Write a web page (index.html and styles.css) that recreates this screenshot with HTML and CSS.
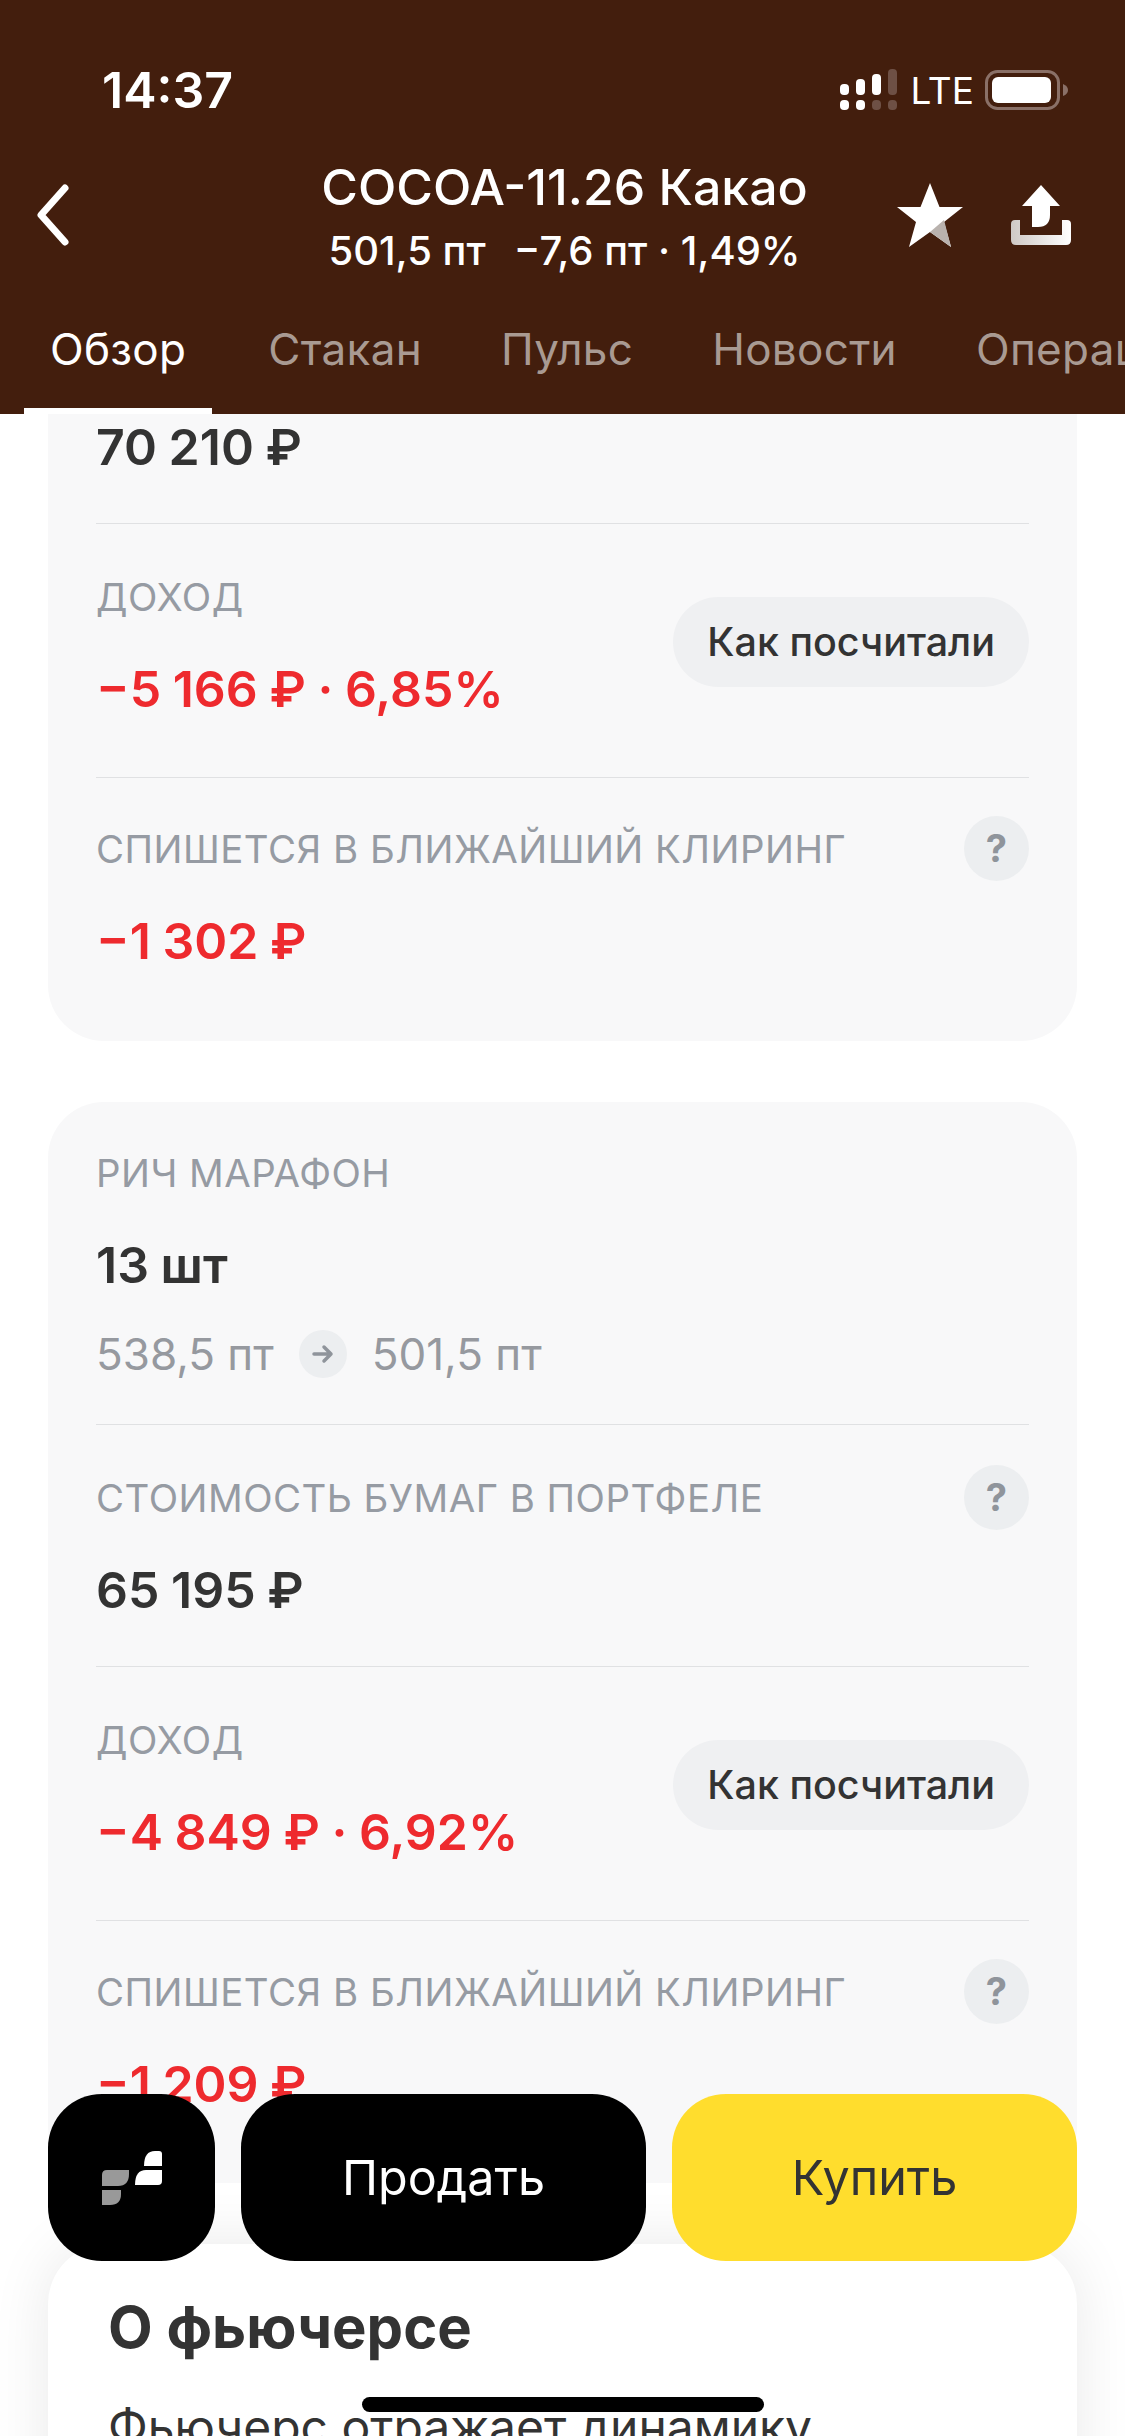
FILE: index.html
```html
<!DOCTYPE html>
<html lang="ru">
<head>
    <meta charset="UTF-8">
    <meta name="viewport" content="width=device-width, initial-scale=1.0">
    <title>COCOA-11.26 Какао</title>
    <link rel="stylesheet" href="styles.css">
</head>
<body>
<div class="screen">
    <header class="top">
        <div class="status">
            <span class="time">14:37</span>
            <div class="status-right">
                <svg class="signal" width="60" height="42" viewBox="0 0 60 42">
                    <g fill="#fff">
                        <rect x="0" y="15" width="9" height="11" rx="4"/>
                        <rect x="0" y="31" width="9" height="10" rx="4"/>
                        <rect x="16" y="10" width="9" height="16" rx="4"/>
                        <rect x="16" y="31" width="9" height="10" rx="4"/>
                        <rect x="32" y="5" width="9" height="21" rx="4"/>
                    </g>
                    <g fill="#6e5045">
                        <rect x="32" y="31" width="9" height="10" rx="4"/>
                        <rect x="48" y="0" width="9" height="26" rx="4"/>
                        <rect x="48" y="31" width="9" height="10" rx="4"/>
                    </g>
                </svg>
                <span class="lte">LTE</span>
                <svg class="battery" width="84" height="40" viewBox="0 0 84 40">
                    <rect x="1.5" y="1.5" width="72" height="37" rx="11" fill="none" stroke="#8a7067" stroke-width="3"/>
                    <rect x="7" y="7" width="59" height="26" rx="6" fill="#fff"/>
                    <path d="M78 14q5 2 5 6t-5 6z" fill="#8a7067"/>
                </svg>
            </div>
        </div>
        <div class="nav">
            <svg class="back" width="44" height="66" viewBox="0 0 44 66">
                <path d="M33 6 9 33l24 27" fill="none" stroke="#fff" stroke-width="7" stroke-linecap="round" stroke-linejoin="round"/>
            </svg>
            <div class="title-box">
                <div class="title">COCOA-11.26 Какао</div>
                <div class="subtitle"><span>501,5 пт</span><span>−7,6 пт · 1,49%</span></div>
            </div>
            <svg class="star" width="66" height="64" viewBox="0 0 66 64">
                <path d="M33 0l9.500 24H66L47 39l7 25-21-15-21 15 7-25L0 24h23.500z" fill="#fff"/>
                <path d="M33 49l14-12 7 27z" fill="#b9b2ae"/>
            </svg>
            <svg class="share" width="60" height="60" viewBox="0 0 60 60">
                <defs>
                    <linearGradient id="tray" x1="0" y1="0" x2="1" y2="0">
                        <stop offset="0" stop-color="#cfc9c5"/>
                        <stop offset="1" stop-color="#fff"/>
                    </linearGradient>
                </defs>
                <path d="M30 0 49 21H39v9q0 12-12 12h-6V21H11z" fill="#fff"/>
                <path d="M0 39q0-4 4-4h5v15h42V35h5q4 0 4 4v16q0 5-5 5H5q-5 0-5-5z" fill="url(#tray)"/>
            </svg>
        </div>
        <nav class="tabs">
            <span class="tab tab-active">Обзор</span>
            <span class="tab">Стакан</span>
            <span class="tab">Пульс</span>
            <span class="tab">Новости</span>
            <span class="tab">Операции</span>
        </nav>
    </header>

    <main class="content">
        <section class="card card-first">
            <div class="row row-cut">
                <div class="value">70 210 ₽</div>
            </div>
            <div class="row row-split">
                <div>
                    <div class="label">Доход</div>
                    <div class="value red">−5 166 ₽ · 6,85%</div>
                </div>
                <span class="pill">Как посчитали</span>
            </div>
            <div class="row row-last">
                <div class="label-line">
                    <div class="label">Спишется в ближайший клиринг</div>
                    <span class="help">?</span>
                </div>
                <div class="value red">−1 302 ₽</div>
            </div>
        </section>

        <section class="card card-second">
            <div class="row row-head">
                <div class="label">Рич Марафон</div>
                <div class="value">13 шт</div>
                <div class="prices">
                    <span>538,5 пт</span>
                    <span class="arrow">
                        <svg width="22" height="20" viewBox="0 0 22 20">
                            <path d="M2 10h17M12 3l7 7-7 7" fill="none" stroke="#8f949b" stroke-width="3.5" stroke-linecap="round" stroke-linejoin="round"/>
                        </svg>
                    </span>
                    <span>501,5 пт</span>
                </div>
            </div>
            <div class="row">
                <div class="label-line">
                    <div class="label">Стоимость бумаг в портфеле</div>
                    <span class="help">?</span>
                </div>
                <div class="value">65 195 ₽</div>
            </div>
            <div class="row row-split">
                <div>
                    <div class="label">Доход</div>
                    <div class="value red">−4 849 ₽ · 6,92%</div>
                </div>
                <span class="pill">Как посчитали</span>
            </div>
            <div class="row row-last">
                <div class="label-line">
                    <div class="label">Спишется в ближайший клиринг</div>
                    <span class="help">?</span>
                </div>
                <div class="value red">−1 209 ₽</div>
            </div>
        </section>

        <section class="about">
            <h2>О фьючерсе</h2>
            <p>Фьючерс отражает динамику</p>
        </section>
    </main>

    <div class="actions">
        <button class="btn btn-logo" type="button">
            <svg width="64" height="56" viewBox="0 0 64 56">
                <path d="M2 25q0-5 5-5h22v4q0 12-11 12H2z" fill="#999"/>
                <path d="M2 40h19v4q0 11-11 11H2z" fill="#999"/>
                <path d="M46 20h16v11q0 4-4 4H35q0-15 11-15z" fill="#fff"/>
                <path d="M44 16q0-15 11-15h4q3 0 3 3v12z" fill="#fff"/>
            </svg>
        </button>
        <button class="btn btn-sell" type="button">Продать</button>
        <button class="btn btn-buy" type="button">Купить</button>
    </div>
    <div class="home-bar"></div>
</div>
</body>
</html>
```

FILE: styles.css
```css
* {
    box-sizing: border-box;
}
html, body {
    margin: 0;
    background-color: #fff;
}
.screen {
    position: relative;
    width: 1125px;
    height: 2436px;
    overflow: hidden;
    font-family: Inter, "Noto Sans", sans-serif;
    color: #333;
}

/* header */
.top {
    height: 414px;
    background-color: #431e0d;
    color: #fff;
}
.status {
    display: flex;
    justify-content: space-between;
    align-items: center;
    height: 126px;
    padding: 54px 56px 0 102px;
}
.time {
    font-size: 50px;
    font-weight: 600;
}
.status-right {
    display: flex;
    align-items: center;
    gap: 11px;
}
.lte {
    font-size: 37px;
    font-weight: 400;
}
.nav {
    display: flex;
    align-items: center;
    height: 110px;
    margin-top: 34px;
    padding: 0 54px 0 32px;
}
.title-box {
    flex: 1;
    padding: 10px 0 0 156px;
    text-align: center;
}
.title {
    font-size: 50px;
    font-weight: 500;
    line-height: 62px;
}
.subtitle {
    display: flex;
    justify-content: center;
    gap: 28px;
    font-size: 40px;
    font-weight: 500;
    line-height: 66px;
}
.star {
    margin-right: 48px;
}
.tabs {
    display: flex;
    gap: 79px;
    height: 116px;
    margin-top: 28px;
    padding: 18px 0 0 50px;
    overflow: hidden;
    white-space: nowrap;
}
.tab {
    flex: none;
    font-size: 44px;
    letter-spacing: 0.3px;
    line-height: 66px;
    color: #a99a92;
}
.tab-active {
    position: relative;
    margin-right: 3px;
    color: #fff;
}
.tab-active::after {
    content: "";
    position: absolute;
    left: -26px;
    right: -26px;
    bottom: 0;
    height: 6px;
    background-color: #fff;
}

/* cards */
.content {
    display: flex;
    flex-direction: column;
    gap: 61px;
    padding: 0 48px;
}
.card {
    padding: 0 48px;
    background-color: #f8f8f9;
    border-radius: 56px;
}
.card-first {
    height: 627px;
    border-radius: 0 0 56px 56px;
}
.card-second {
    height: 1081px;
}
.row {
    padding: 47px 0 43px;
    border-bottom: 1px solid #e0e1e3;
}
.row-cut {
    padding-top: 0;
}
.row-head {
    padding-top: 45px;
    padding-bottom: 41px;
}
.row-split {
    display: flex;
    justify-content: space-between;
    align-items: flex-start;
    padding-bottom: 55px;
}
.row-last {
    padding-top: 45px;
    border-bottom: none;
}
.label {
    font-size: 38.400px;
    line-height: 52px;
    letter-spacing: 0.5px;
    color: #969ba3;
    text-transform: uppercase;
}
.label-line {
    display: flex;
    justify-content: space-between;
    align-items: center;
    height: 52px;
}
.value {
    margin-top: 33px;
    font-size: 50px;
    font-weight: 600;
    word-spacing: -1px;
    line-height: 66px;
    color: #333;
}
.row-cut .value {
    margin-top: 0;
}
.value.red {
    color: #ee2a2e;
}
.prices {
    display: flex;
    align-items: center;
    gap: 25px;
    margin-top: 27px;
    font-size: 44px;
    line-height: 58px;
    color: #96999f;
}
.arrow {
    display: flex;
    justify-content: center;
    align-items: center;
    width: 48px;
    height: 48px;
    background-color: #eceef0;
    border-radius: 50%;
}
.pill {
    display: flex;
    align-items: center;
    height: 90px;
    margin-top: 26px;
    padding: 0 34px;
    font-size: 39.500px;
    font-weight: 500;
    color: #333;
    background-color: #eff0f2;
    border-radius: 45px;
}
.help {
    display: flex;
    flex: none;
    justify-content: center;
    align-items: center;
    width: 65px;
    height: 65px;
    margin-top: -2px;
    font-size: 38px;
    font-weight: 700;
    color: #8f949b;
    background-color: #eceef0;
    border-radius: 50%;
}

/* about block under the buttons */
.about {
    height: 300px;
    padding: 47px 60px;
    background-color: #fff;
    border-radius: 60px 60px 0 0;
    box-shadow: 0 0 60px rgba(0, 0, 0, 0.09);
}
.about h2 {
    margin: 0;
    font-size: 58px;
    font-weight: 700;
    line-height: 72px;
}
.about p {
    margin: 34px 0 0;
    font-size: 48px;
    line-height: 60px;
}

/* floating buttons */
.actions {
    position: absolute;
    left: 48px;
    top: 2094px;
    display: flex;
    gap: 26px;
    width: 1029px;
    height: 167px;
}
.btn {
    display: flex;
    justify-content: center;
    align-items: center;
    height: 167px;
    padding: 0;
    border: none;
    border-radius: 54px;
    font-family: inherit;
    font-size: 48.500px;
}
.btn-logo {
    width: 167px;
    background-color: #000;
}
.btn-sell {
    width: 405px;
    background-color: #000;
    color: #fff;
}
.btn-buy {
    width: 405px;
    background-color: #ffdd2d;
    color: #333;
}
.home-bar {
    position: absolute;
    left: 362px;
    top: 2397px;
    width: 402px;
    height: 15px;
    background-color: #000;
    border-radius: 8px;
}
```
